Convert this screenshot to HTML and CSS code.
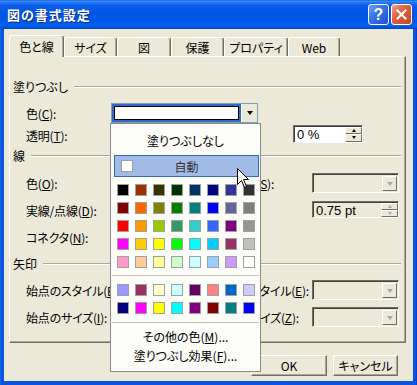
FILE: index.html
```html
<!DOCTYPE html>
<html lang="ja">
<head>
<meta charset="utf-8">
<link rel="stylesheet" href="styles.css">
</head>
<body>
<div class="window">
  <div class="titlebar">
    <span class="title">図の書式設定</span>
    <div class="tbtns">
      <span class="tb help">?</span>
      <span class="tb close"><svg width="11" height="11" viewBox="0 0 11 11"><path d="M1.5 1.5 L9.5 9.5 M9.5 1.5 L1.5 9.5" stroke="#fff" stroke-width="2.2" stroke-linecap="square"/></svg></span>
    </div>
  </div>
  <div class="client">
    <div class="tabs">
      <div class="tab active t-cl">色と線</div>
      <div class="tab t-sz">サイズ</div>
      <div class="tab t-zu">図</div>
      <div class="tab t-ho">保護</div>
      <div class="tab t-pr">プロパティ</div>
      <div class="tab t-web">Web</div>
    </div>
    <div class="panel">
      <div class="hdr h-fill"><span>塗りつぶし</span><span class="line"></span></div>
      <div class="row r-fc">
        <span class="lbl">色(<u>C</u>):</span>
        <div class="combo">
          <div class="combo-field"><div class="combo-val"></div></div>
          <div class="combo-btn"><span class="tri"></span></div>
        </div>
      </div>
      <div class="row r-ft">
        <span class="lbl">透明(<u>T</u>):</span>
        <span class="sp-slider"></span>
        <div class="spin spin-t">
          <span class="spin-text">0 %</span>
          <div class="spin-btns"><span class="sb"><span class="up"></span></span><span class="sb"><span class="dn"></span></span></div>
        </div>
      </div>
      <div class="hdr h-line"><span>線</span><span class="line"></span></div>
      <div class="row r-lc">
        <span class="lbl">色(<u>O</u>):</span>
        <span class="sp-left"></span>
        <span class="rlbl">スタイル(<u>S</u>):</span>
        <div class="dcombo"><div class="dcombo-btn"><span class="tri gray"></span></div></div>
      </div>
      <div class="row r-ld">
        <span class="lbl">実線/点線(<u>D</u>):</span>
        <span class="sp-left"></span>
        <span class="rlbl">太さ(<u>W</u>):</span>
        <div class="spin spin-w">
          <span class="spin-text">0.75 pt</span>
          <div class="spin-btns"><span class="sb"><span class="up gray"></span></span><span class="sb"><span class="dn gray"></span></span></div>
        </div>
      </div>
      <div class="row r-ln">
        <span class="lbl">コネクタ(<u>N</u>):</span>
      </div>
      <div class="hdr h-arrow"><span>矢印</span><span class="line"></span></div>
      <div class="row r-as">
        <span class="lbl">始点のスタイル(<u>B</u>):</span>
        <span class="sp-left"></span>
        <span class="rlbl">終点のスタイル(<u>E</u>):</span>
        <div class="dcombo"><div class="dcombo-btn"><span class="tri gray"></span></div></div>
      </div>
      <div class="row r-az">
        <span class="lbl">始点のサイズ(<u>I</u>):</span>
        <span class="sp-left"></span>
        <span class="rlbl">終点のサイズ(<u>Z</u>):</span>
        <div class="dcombo"><div class="dcombo-btn"><span class="tri gray"></span></div></div>
      </div>
    </div>
    <div class="buttons">
      <div class="btn b-ok">OK</div>
      <div class="btn b-cancel">キャンセル</div>
    </div>
  </div>

  <div class="dropdown">
    <div class="dd-item dd-none">塗りつぶしなし</div>
    <div class="dd-auto"><span class="auto-box"></span><span class="auto-text">自動</span><span></span></div>
    <div class="swatches sw-main">
      <span class="sw" style="background:#000000"></span><span class="sw" style="background:#993300"></span><span class="sw" style="background:#333300"></span><span class="sw" style="background:#003300"></span><span class="sw" style="background:#003366"></span><span class="sw" style="background:#000080"></span><span class="sw" style="background:#333399"></span><span class="sw" style="background:#333333"></span>
      <span class="sw" style="background:#800000"></span><span class="sw" style="background:#FF6600"></span><span class="sw" style="background:#808000"></span><span class="sw" style="background:#008000"></span><span class="sw" style="background:#008080"></span><span class="sw" style="background:#0000FF"></span><span class="sw" style="background:#666699"></span><span class="sw" style="background:#808080"></span>
      <span class="sw" style="background:#FF0000"></span><span class="sw" style="background:#FF9900"></span><span class="sw" style="background:#99CC00"></span><span class="sw" style="background:#339966"></span><span class="sw" style="background:#33CCCC"></span><span class="sw" style="background:#3366FF"></span><span class="sw" style="background:#800080"></span><span class="sw" style="background:#969696"></span>
      <span class="sw" style="background:#FF00FF"></span><span class="sw" style="background:#FFCC00"></span><span class="sw" style="background:#FFFF00"></span><span class="sw" style="background:#00FF00"></span><span class="sw" style="background:#00FFFF"></span><span class="sw" style="background:#00CCFF"></span><span class="sw" style="background:#993366"></span><span class="sw" style="background:#C0C0C0"></span>
      <span class="sw" style="background:#FF99CC"></span><span class="sw" style="background:#FFCC99"></span><span class="sw" style="background:#FFFF99"></span><span class="sw" style="background:#CCFFCC"></span><span class="sw" style="background:#CCFFFF"></span><span class="sw" style="background:#99CCFF"></span><span class="sw" style="background:#CC99FF"></span><span class="sw" style="background:#FFFFFF"></span>
    </div>
    <div class="sep sep1"></div>
    <div class="swatches sw-extra">
      <span class="sw" style="background:#9999FF"></span><span class="sw" style="background:#993366"></span><span class="sw" style="background:#FFFFCC"></span><span class="sw" style="background:#CCFFFF"></span><span class="sw" style="background:#660066"></span><span class="sw" style="background:#FF8080"></span><span class="sw" style="background:#0066CC"></span><span class="sw" style="background:#CCCCFF"></span>
      <span class="sw" style="background:#000080"></span><span class="sw" style="background:#FF00FF"></span><span class="sw" style="background:#FFFF00"></span><span class="sw" style="background:#00FFFF"></span><span class="sw" style="background:#800080"></span><span class="sw" style="background:#800000"></span><span class="sw" style="background:#008080"></span><span class="sw" style="background:#0000FF"></span>
    </div>
    <div class="sep sep2"></div>
    <div class="dd-item dd-small dd-more">その他の色(<u>M</u>)...</div>
    <div class="dd-item dd-small">塗りつぶし効果(<u>F</u>)...</div>
  </div>

  <svg class="cursor" width="13" height="21" viewBox="0 0 13 21"><path d="M0.5 0.5 V16.5 L4.5 12.5 L7.5 19.5 L9.5 18.5 L6.5 11.5 H11.5 Z" fill="#fff" stroke="#000" stroke-linejoin="miter"/></svg>
</div>
</body>
</html>
```
FILE: styles.css
```css
* { box-sizing: border-box; }
body {
  margin: 0;
  background: #ECE9D8;
  font-family: "Noto Sans CJK JP", "Noto Sans", sans-serif;
  font-size: 12px;
  color: #000;
  font-feature-settings: "palt";
}
u { text-decoration: underline; text-underline-offset: 1px; }

.window {
  position: relative;
  width: 417px;
  height: 385px;
  background: #0A55E0;
  box-shadow: inset 1px 0 #1B62E8, inset -1px 0 #0840C8;
  overflow: hidden;
  display: flex;
  flex-direction: column;
}

/* Title bar */
.titlebar {
  height: 29px;
  flex: none;
  display: flex;
  align-items: flex-start;
  padding-left: 7px;
  background: linear-gradient(to bottom, #0A5FDC 0%, #3C8EF7 4%, #2474F2 9%, #0A5DEB 20%, #0056E4 45%, #0056E6 70%, #0560EE 88%, #0048D0 100%);
}
.title {
  flex: 1;
  color: #fff;
  font-weight: bold;
  font-size: 13px;
  letter-spacing: 1px;
  line-height: 29px;
  text-shadow: 1px 1px 0 #0B2A8C;
}
.tbtns {
  display: flex;
  gap: 2px;
  margin: 4px 5px 0 0;
}
.tb {
  width: 21px;
  height: 21px;
  border: 1px solid #fff;
  border-radius: 3px;
  display: flex;
  align-items: center;
  justify-content: center;
}
.help {
  background: linear-gradient(135deg, #6AA0FA 0%, #3771E8 45%, #1E52D0 100%);
  color: #fff;
  font: bold 16px "Liberation Sans", sans-serif;
}
.close {
  background: linear-gradient(135deg, #F4A088 0%, #E2603C 40%, #CC4420 100%);
}

/* Client */
.client {
  margin: 0 4px;
  height: 352px;
  background: #ECE9D8;
  padding: 6px 0 0 5px;
  display: flex;
  flex-direction: column;
}

.tabs {
  display: flex;
  align-items: flex-end;
  height: 21px;
  position: relative;
  z-index: 1;
}
.tab {
  height: 19px;
  display: flex;
  align-items: center;
  justify-content: center;
  border-top: 1px solid #fff;
  border-left: 1px solid #fff;
  border-right: 1px solid #716F64;
  box-shadow: inset -1px 0 #ACA899;
  border-radius: 3px 3px 0 0;
  background: #ECE9D8;
  padding-top: 1px;
}
.tab.active { height: 22px; margin-bottom: -1px; padding-bottom: 2px; }
.t-cl { width: 55px; }
.t-sz { width: 53px; }
.t-zu { width: 54px; }
.t-ho { width: 53px; }
.t-pr { width: 64px; }
.t-web { width: 52px; }

.panel {
  width: 397px;
  height: 287px;
  border-top: 1px solid #fff;
  border-left: 1px solid #fff;
  border-right: 1px solid #716F64;
  border-bottom: 1px solid #716F64;
  box-shadow: inset -1px -1px #ACA899;
  padding-top: 22px;
  display: flex;
  flex-direction: column;
}

.hdr {
  height: 14px;
  display: flex;
  align-items: center;
  padding: 0 4px 0 3px;
  white-space: nowrap;
}
.hdr .line {
  flex: 1;
  height: 2px;
  border-top: 1px solid #ACA899;
  border-bottom: 1px solid #fff;
  margin-left: 6px;
  margin-top: 1px;
}
.h-line { margin-top: 2px; }
.h-arrow { margin-top: 8px; }

.row {
  display: flex;
  align-items: center;
  height: 22px;
  padding-left: 16px;
  white-space: nowrap;
}
.r-fc { margin-top: 9px; }
.r-lc { margin-top: 10px; }
.r-ld, .r-ln, .r-az { margin-top: 5px; }
.r-as { margin-top: 9px; }

.lbl { width: 85px; flex: none; letter-spacing: -0.2px; }
.sp-slider { width: 182px; flex: none; }
.sp-left { width: 103px; flex: none; }
.rlbl { width: 98px; flex: none; letter-spacing: -0.2px; }

/* Active combo */
.combo {
  width: 147px;
  height: 20px;
  display: flex;
  border: 1px solid #7F9DB9;
  background: #fff;
}
.combo-field {
  flex: 1;
  background: #316AC5;
  padding: 2px;
}
.combo-val {
  height: 100%;
  background: #fff;
  border: 1px solid #000;
}
.combo-btn {
  width: 16px;
  background: #ECE9D8;
  border-left: 1px solid #fff;
  display: flex;
  align-items: center;
  justify-content: center;
}
.tri {
  width: 0;
  height: 0;
  border-left: 3.5px solid transparent;
  border-right: 3.5px solid transparent;
  border-top: 4px solid #000;
}
.tri.gray { border-top-color: #ACA899; }

/* Disabled combo */
.dcombo {
  width: 87px;
  height: 20px;
  border-top: 1px solid #716F64;
  border-left: 1px solid #716F64;
  border-right: 1px solid #fff;
  border-bottom: 1px solid #fff;
  box-shadow: inset 1px 1px #404040;
  background: #ECE9D8;
  display: flex;
  justify-content: flex-end;
  padding: 2px 1px 1px 2px;
}
.dcombo-btn {
  width: 15px;
  border-top: 1px solid #fff;
  border-left: 1px solid #fff;
  border-right: 1px solid #716F64;
  border-bottom: 1px solid #716F64;
  display: flex;
  align-items: center;
  justify-content: center;
}

/* Spin boxes */
.spin {
  height: 18px;
  border-top: 1px solid #716F64;
  border-left: 1px solid #716F64;
  border-right: 1px solid #fff;
  border-bottom: 1px solid #fff;
  box-shadow: inset 1px 1px #404040;
  display: flex;
  align-items: stretch;
  padding: 1px 0 0 1px;
}
.spin-t { width: 70px; background: #fff; margin-bottom: 3px; }
.spin-w { width: 87px; height: 17px; background: #ECE9D8; margin-bottom: 2px; }
.spin-text {
  flex: 1;
  padding-left: 2px;
  line-height: 15px;
  font-family: "Liberation Sans", "Noto Sans CJK JP", sans-serif;
  font-size: 13px;
}
.spin-btns {
  width: 17px;
  display: flex;
  flex-direction: column;
}
.sb {
  flex: 1;
  background: #ECE9D8;
  border-top: 1px solid #fff;
  border-left: 1px solid #fff;
  border-right: 1px solid #716F64;
  border-bottom: 1px solid #716F64;
  display: flex;
  align-items: center;
  justify-content: center;
}
.up, .dn {
  width: 0;
  height: 0;
  border-left: 2.5px solid transparent;
  border-right: 2.5px solid transparent;
}
.up { border-bottom: 3px solid #000; }
.dn { border-top: 3px solid #000; }
.up.gray { border-bottom-color: #ACA899; }
.dn.gray { border-top-color: #ACA899; }

/* Buttons */
.buttons {
  display: flex;
  justify-content: flex-end;
  gap: 6px;
  margin-top: 12px;
  padding-right: 15px;
}
.btn {
  height: 21px;
  border-top: 1px solid #fff;
  border-left: 1px solid #fff;
  border-right: 1px solid #716F64;
  border-bottom: 1px solid #716F64;
  box-shadow: inset -1px -1px #ACA899;
  background: #ECE9D8;
  display: flex;
  align-items: center;
  justify-content: center;
}
.b-ok { width: 76px; }
.b-cancel { width: 65px; }

/* Dropdown palette */
.dropdown {
  position: absolute;
  left: 110px;
  top: 123px;
  width: 151px;
  height: 249px;
  background: #FCFCF9;
  border: 1px solid #8A8A8A;
  display: flex;
  flex-direction: column;
  z-index: 5;
}
.dd-item {
  height: 22px;
  display: flex;
  align-items: center;
  justify-content: center;
  white-space: nowrap;
}
.dd-none { margin-top: 5px; }
.dd-small { height: 19px; }
.dd-more { margin-top: 4px; }
.dd-auto {
  margin: 4px 1px 0 3px;
  height: 22px;
  border: 1px solid #316AC5;
  background: #A2BBE6;
  display: grid;
  grid-template-columns: 1fr auto 1fr;
  align-items: center;
  color: #333;
}
.auto-box {
  width: 12px;
  height: 12px;
  margin-left: 6px;
  background: #fff;
  border: 1px solid #A0A0A0;
}
.swatches {
  display: grid;
  grid-template-columns: repeat(8, 12px);
  gap: 6px;
  margin-left: 6px;
}
.sw-main { margin-top: 7px; }
.sw-extra { margin-top: 8px; }
.sw {
  width: 12px;
  height: 12px;
  border: 1px solid #A0A0A0;
}
.sep {
  height: 1px;
  background: #C5C2B8;
  margin: 0 1px;
}
.sep1 { margin-top: 7px; }
.sep2 { margin-top: 8px; }

.cursor {
  position: absolute;
  left: 237px;
  top: 168px;
  z-index: 10;
}
```
